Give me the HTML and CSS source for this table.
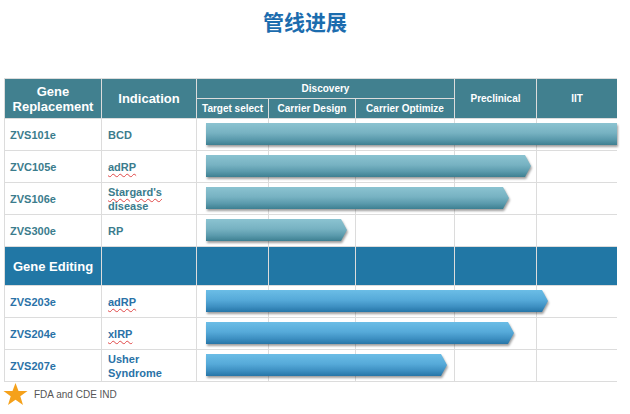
FILE: index.html
```html
<!DOCTYPE html>
<html lang="zh">
<head>
<meta charset="utf-8">
<link rel="stylesheet" href="styles.css">
</head>
<body>
<div class="page">
  <h1 class="title">管线进展</h1>
  <div class="grid">
    <div class="hd span2 big">Gene<br>Replacement</div>
    <div class="hd span2 big">Indication</div>
    <div class="hd disc">Discovery</div>
    <div class="hd span2">Preclinical</div>
    <div class="hd span2">IIT</div>
    <div class="hd">Target select</div>
    <div class="hd">Carrier Design</div>
    <div class="hd">Carrier Optimize</div>

    <div class="c name">ZVS101e</div>
    <div class="c ind"><div>BCD</div></div>
    <div class="c tl"><div class="bar teal flat" style="width:411px"><div class="fill"></div></div></div>
    <div class="c"></div><div class="c"></div><div class="c"></div><div class="c"></div>

    <div class="c name">ZVC105e</div>
    <div class="c ind"><div><span class="sp">adRP</span></div></div>
    <div class="c tl"><div class="bar teal" style="width:325px"><div class="fill"></div></div></div>
    <div class="c"></div><div class="c"></div><div class="c"></div><div class="c"></div>

    <div class="c name">ZVS106e</div>
    <div class="c ind"><div><span class="sp">Stargard's</span><br>disease</div></div>
    <div class="c tl"><div class="bar teal" style="width:303px"><div class="fill"></div></div></div>
    <div class="c"></div><div class="c"></div><div class="c"></div><div class="c"></div>

    <div class="c name">ZVS300e</div>
    <div class="c ind"><div>RP</div></div>
    <div class="c tl"><div class="bar teal" style="width:141px"><div class="fill"></div></div></div>
    <div class="c"></div><div class="c"></div><div class="c"></div><div class="c"></div>

    <div class="sec label">Gene Editing</div>
    <div class="sec"></div><div class="sec"></div><div class="sec"></div><div class="sec"></div><div class="sec"></div><div class="sec"></div>

    <div class="c name blue">ZVS203e</div>
    <div class="c ind blue"><div><span class="sp">adRP</span></div></div>
    <div class="c tl"><div class="bar blue" style="width:342px"><div class="fill"></div></div></div>
    <div class="c"></div><div class="c"></div><div class="c"></div><div class="c"></div>

    <div class="c name blue">ZVS204e</div>
    <div class="c ind blue"><div><span class="sp">xlRP</span></div></div>
    <div class="c tl"><div class="bar blue" style="width:308px"><div class="fill"></div></div></div>
    <div class="c"></div><div class="c"></div><div class="c"></div><div class="c"></div>

    <div class="c name blue">ZVS207e</div>
    <div class="c ind blue"><div>Usher<br>Syndrome</div></div>
    <div class="c tl"><div class="bar blue" style="width:241px"><div class="fill"></div></div></div>
    <div class="c"></div><div class="c"></div><div class="c"></div><div class="c"></div>
  </div>
  <div class="legend">
    <svg class="star" width="25" height="22" viewBox="0 0 25 22"><polygon points="12.5,0 15.5,8 24.5,8 17.3,13.3 20,22 12.5,16.8 5,22 7.7,13.3 0.5,8 9.5,8" fill="#f5a11b"/></svg>
    <span class="legend-text">FDA and CDE IND</span>
  </div>
</div>
</body>
</html>
```
FILE: styles.css
```css
* { box-sizing: border-box; }
html, body { margin: 0; padding: 0; background: #fff; }
body { font-family: "Liberation Sans", Arial, "Noto Sans CJK SC", sans-serif; }
.page { width: 630px; height: 414px; overflow: hidden; }
.title {
  margin: 0;
  padding: 7px 20px 0 0;
  height: 78px;
  text-align: center;
  font-family: "Noto Sans CJK SC", sans-serif;
  font-weight: 700;
  font-size: 21px;
  line-height: 28px;
  color: #1b6cae;
}
.grid {
  margin-left: 4px;
  width: 613px;
  display: grid;
  grid-template-columns: 96px 94px 71px 86px 98px 81px 80px;
  grid-template-rows: 19px 19px 31px 31px 31px 31px 38px 31px 31px 31px;
  gap: 1px;
  padding: 1px 0 1px 1px;
  background: #dcdcdc;
}
.hd {
  background: #41808f;
  color: #fff;
  font-weight: 700;
  font-size: 10px;
  display: flex;
  align-items: center;
  justify-content: center;
  text-align: center;
  white-space: nowrap;
}
.hd.span2 { grid-row: span 2; }
.hd.disc { grid-column: span 3; }
.hd.big { font-size: 13px; line-height: 15px; }
.c {
  background: #fff;
  display: flex;
  align-items: center;
  font-weight: 700;
  font-size: 11px;
  line-height: 14px;
  color: #3b7c8d;
}
.c.name { padding-left: 5px; }
.c.ind { padding-left: 6px; }
.c.blue { color: #2a72a7; }
.sp {
  text-decoration: underline wavy #e04848;
  text-decoration-thickness: 1px;
  text-underline-offset: 2px;
}
.c.tl { position: relative; }
.sec {
  background: #2177a5;
  color: #fff;
  font-weight: 700;
  font-size: 13px;
  display: flex;
  align-items: center;
  justify-content: center;
}
.bar {
  position: absolute;
  left: 9px;
  top: 4px;
  height: 22px;
  filter: drop-shadow(1px 2px 1px rgba(0,0,0,0.38));
}
.bar .fill {
  width: 100%;
  height: 100%;
  clip-path: polygon(0 0, calc(100% - 6px) 0, 100% 50%, calc(100% - 6px) 100%, 0 100%);
}
.bar.flat .fill { clip-path: none; }
.bar.teal .fill { background: linear-gradient(to bottom, #8bc3d1 0%, #77b2c2 45%, #5a9aac 75%, #3d7f91 100%); }
.bar.blue .fill { background: linear-gradient(to bottom, #6bbde6 0%, #56aad9 45%, #3e90c2 75%, #2675a7 100%); }
.legend {
  display: flex;
  align-items: center;
  gap: 6px;
  padding: 1px 0 0 3px;
}
.star { display: block; }
.legend-text { font-size: 10px; color: #555; }
```
